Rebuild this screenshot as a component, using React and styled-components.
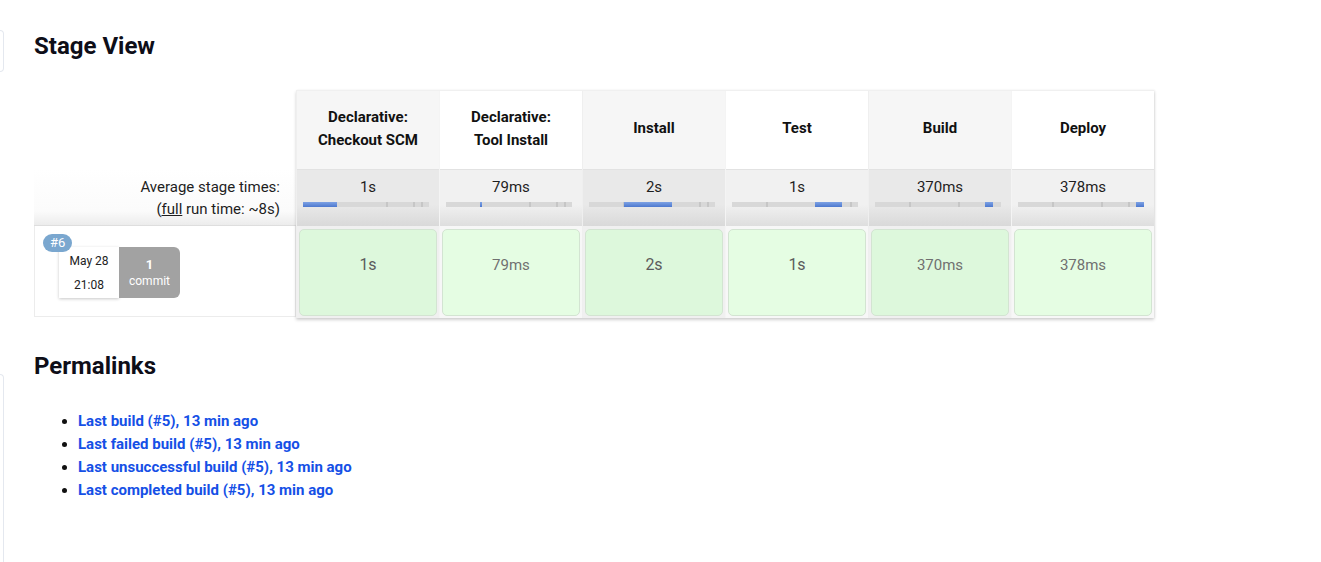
import React from 'react';
import styled, { createGlobalStyle } from 'styled-components';

const GlobalStyle = createGlobalStyle`
    html, body {
        margin: 0;
        padding: 0;
        background: #ffffff;
    }

    body {
        font-family: Roboto, "Liberation Sans", Arial, sans-serif;
        color: #14141f;
    }
`

const stages = [
    { name: ['Declarative:', 'Checkout SCM'], avg: '1s', run: '1s', from: 0, to: 34 },
    { name: ['Declarative:', 'Tool Install'], avg: '79ms', run: '79ms', from: 34, to: 35 },
    { name: ['Install'], avg: '2s', run: '2s', from: 35, to: 83 },
    { name: ['Test'], avg: '1s', run: '1s', from: 83, to: 110 },
    { name: ['Build'], avg: '370ms', run: '370ms', from: 110, to: 118 },
    { name: ['Deploy'], avg: '378ms', run: '378ms', from: 118, to: 126 },
];

const ticks = [34, 83, 110, 118];

const permalinks = [
    'Last build (#5), 13 min ago',
    'Last failed build (#5), 13 min ago',
    'Last unsuccessful build (#5), 13 min ago',
    'Last completed build (#5), 13 min ago',
];

const Page = styled.div`
    display: flex;
    min-height: 100vh;
`

const Sidebar = styled.div`
    width: 4px;
    display: flex;
    flex-direction: column;
    padding-top: 30px;
`

const SidePanel = styled.div`
    border: 1px solid #e4e8ef;
    border-left: none;
    border-radius: ${p => p.bottom ? '0 10px 0 0' : '0 8px 8px 0'};
    height: ${p => p.bottom ? 'auto' : '40px'};
    flex: ${p => p.bottom ? 1 : 'none'};
    margin-top: ${p => p.bottom ? '302px' : '0'};
    border-bottom: ${p => p.bottom ? 'none' : '1px solid #e4e8ef'};
`

const Main = styled.div`
    flex: 1;
    padding-left: 30px;
`

const Heading = styled.h2`
    margin: ${p => p.second ? '34px' : '32px'} 0 0;
    font-size: 24px;
    line-height: 28px;
    font-weight: 700;
    color: #0e0e18;
`

const Table = styled.div`
    display: flex;
    margin-top: 30px;
`

const LeftCol = styled.div`
    width: 262px;
    display: flex;
    flex-direction: column;
`

const LeftHeader = styled.div`
    height: 79px;
`

const AvgLabel = styled.div`
    height: 57px;
    box-sizing: border-box;
    padding: 7px 16px 0 0;
    text-align: right;
    font-size: 15px;
    line-height: 22px;
    color: #1e1e1e;
    background: linear-gradient(#ffffff 0%, #fbfbfb 75%, #ececec 100%);
    border-bottom: 1px solid #dedede;

    u {
        text-decoration: underline;
    }
`

const BuildCell = styled.div`
    height: 91px;
    box-sizing: border-box;
    border: 1px solid #ececec;
    border-top: none;
    padding: 21px 0 0 24px;
`

const BuildInfo = styled.div`
    position: relative;
    display: flex;
    width: 121px;
`

const BuildBadge = styled.span`
    position: absolute;
    left: -16px;
    top: -13px;
    height: 18px;
    padding: 0 7px;
    border-radius: 9px;
    background: #7aa7cf;
    color: #fff;
    font-size: 13px;
    line-height: 18px;
    z-index: 1;
`

const DateBox = styled.div`
    width: 60px;
    height: 51px;
    background: #fff;
    box-shadow: 0 1px 3px rgba(0, 0, 0, 0.22);
    display: flex;
    flex-direction: column;
    align-items: center;
    justify-content: center;
    gap: 8px;
    font-size: 12px;
    line-height: 16px;
    color: #222;
`

const CommitBox = styled.div`
    width: 61px;
    height: 51px;
    background: #a2a2a2;
    border-radius: 0 6px 6px 0;
    color: #fff;
    display: flex;
    flex-direction: column;
    align-items: center;
    justify-content: center;
    font-size: 12px;
    line-height: 16px;

    b {
        font-size: 13px;
    }
`

const Stages = styled.div`
    display: flex;
    border-top: 1px solid #f0f0f0;
    box-shadow: 0 2px 3px rgba(0, 0, 0, 0.18), 1px 0 2px rgba(0, 0, 0, 0.06);
`

const StageCol = styled.div`
    width: 143px;
    display: flex;
    flex-direction: column;
    border-left: 1px solid ${p => p.odd ? '#efefef' : '#f4f4f4'};
    box-sizing: border-box;
`

const StageHeader = styled.div`
    height: 78px;
    box-sizing: border-box;
    padding-bottom: 3px;
    background: ${p => p.odd ? '#f6f6f6' : '#ffffff'};
    display: flex;
    align-items: center;
    justify-content: center;
    text-align: center;
    font-size: 15px;
    font-weight: 700;
    line-height: 23px;
    color: #111;
`

const StageAvg = styled.div`
    height: 57px;
    box-sizing: border-box;
    border-top: 1px solid #e2e2e2;
    padding-top: 7px;
    background: ${p => p.odd
        ? 'linear-gradient(#e9e9e9 0%, #e9e9e9 62%, #d9d9d9 100%)'
        : 'linear-gradient(#f1f1f1 0%, #f1f1f1 62%, #dedede 100%)'};
    text-align: center;
    font-size: 15px;
    line-height: 20px;
    color: #1e1e1e;
`

const Track = styled.div`
    position: relative;
    width: 126px;
    height: 5px;
    margin: 5px 0 0 6px;
    background: #d8d8d8;
`

const Tick = styled.span`
    position: absolute;
    top: 0;
    width: 2px;
    height: 5px;
    background: #c6c6c6;
`

const Fill = styled.span`
    position: absolute;
    top: 0;
    height: 5px;
    background: linear-gradient(#7da2e4, #4d78cf);
`

const StageRun = styled.div`
    height: 92px;
    box-sizing: border-box;
    padding: 3px 2px 2px 2px;
    background: ${p => p.odd ? '#f0f0f0' : '#f7f7f7'};
`

const RunBox = styled.div`
    height: 100%;
    box-sizing: border-box;
    border: 1px solid #d3e4d2;
    border-radius: 5px;
    background: ${p => p.odd ? '#ddf8dc' : '#e5fde3'};
    display: flex;
    align-items: flex-start;
    justify-content: center;
    padding-top: 25px;
    line-height: 20px;
    font-size: ${p => p.big ? '16px' : '15px'};
    color: ${p => p.big ? '#5c5c5c' : '#707070'};
`

const LinkList = styled.ul`
    margin: 30px 0 0;
    padding-left: 44px;
    font-size: 15px;
    line-height: 23px;

    li::marker {
        color: #111;
    }
`

const Link = styled.a`
    color: #1550e6;
    font-weight: 700;
    text-decoration: none;
`

const App = () => {
    return (
        <Page>
            <GlobalStyle />
            <Sidebar>
                <SidePanel />
                <SidePanel bottom />
            </Sidebar>
            <Main>
                <Heading>Stage View</Heading>
                <Table>
                    <LeftCol>
                        <LeftHeader />
                        <AvgLabel>
                            Average stage times:<br />
                            (<u>full</u> run time: ~8s)
                        </AvgLabel>
                        <BuildCell>
                            <BuildInfo>
                                <BuildBadge>#6</BuildBadge>
                                <DateBox>
                                    <span>May 28</span>
                                    <span>21:08</span>
                                </DateBox>
                                <CommitBox>
                                    <b>1</b>
                                    <span>commit</span>
                                </CommitBox>
                            </BuildInfo>
                        </BuildCell>
                    </LeftCol>
                    <Stages>
                        {stages.map((stage, index) => {
                            const odd = index % 2 === 0;
                            return (
                                <StageCol key={index} odd={odd}>
                                    <StageHeader odd={odd}>
                                        <div>
                                            {stage.name.map(line => <div key={line}>{line}</div>)}
                                        </div>
                                    </StageHeader>
                                    <StageAvg odd={odd}>
                                        {stage.avg}
                                        <Track>
                                            {ticks.filter(t => t !== stage.from && t !== stage.to).map(t => (
                                                <Tick key={t} style={{ left: t }} />
                                            ))}
                                            <Fill style={{ left: stage.from, width: Math.max(stage.to - stage.from, 2) }} />
                                        </Track>
                                    </StageAvg>
                                    <StageRun odd={odd}>
                                        <RunBox odd={odd} big={!stage.run.endsWith('ms')}>{stage.run}</RunBox>
                                    </StageRun>
                                </StageCol>
                            );
                        })}
                    </Stages>
                </Table>
                <Heading second>Permalinks</Heading>
                <LinkList>
                    {permalinks.map(link => (
                        <li key={link}><Link href="#">{link}</Link></li>
                    ))}
                </LinkList>
            </Main>
        </Page>
    );
}

export default App;
